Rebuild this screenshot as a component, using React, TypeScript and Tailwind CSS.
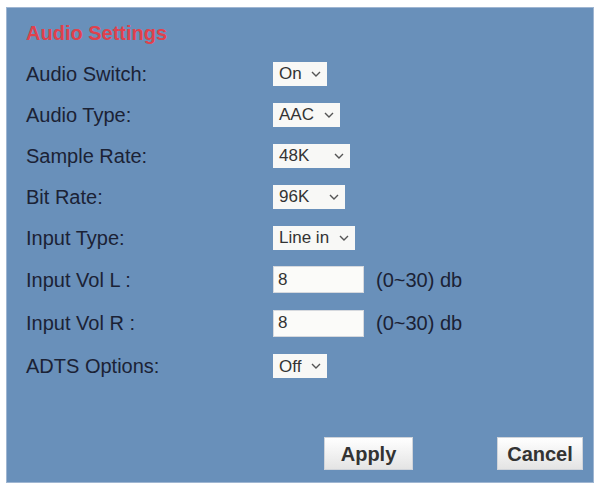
import React from "react";

type Row =
  | { label: string; kind: "select"; value: string; width: string }
  | { label: string; kind: "input"; value: string };

const rows: { row: Row; height: string }[] = [
  { row: { label: "Audio Switch:", kind: "select", value: "On", width: "w-[54px]" }, height: "h-[41px]" },
  { row: { label: "Audio Type:", kind: "select", value: "AAC", width: "w-[67px]" }, height: "h-[41px]" },
  { row: { label: "Sample Rate:", kind: "select", value: "48K", width: "w-[77px]" }, height: "h-[41px]" },
  { row: { label: "Bit Rate:", kind: "select", value: "96K", width: "w-[72px]" }, height: "h-[41px]" },
  { row: { label: "Input Type:", kind: "select", value: "Line in", width: "w-[82px]" }, height: "h-[41px]" },
  { row: { label: "Input Vol L :", kind: "input", value: "8" }, height: "h-[43px]" },
  { row: { label: "Input Vol R :", kind: "input", value: "8" }, height: "h-[44px]" },
  { row: { label: "ADTS Options:", kind: "select", value: "Off", width: "w-[54px]" }, height: "h-[42px]" },
];

function Chevron() {
  return (
    <svg width="10" height="6" viewBox="0 0 10 6" className="shrink-0">
      <polyline points="1,1 5,5 9,1" fill="none" stroke="#555" strokeWidth="1.4" />
    </svg>
  );
}

function Select({ value, width }: { value: string; width: string }) {
  return (
    <div
      className={`${width} h-[24px] bg-[#f8f8f6] flex items-center justify-between pl-[6px] pr-[6px] text-[17px] leading-none text-[#333]`}
    >
      <span>{value}</span>
      <Chevron />
    </div>
  );
}

export default function App() {
  return (
    <div
      className="w-[601px] h-[487px] bg-white pt-[7px] pl-[6px]"
      style={{ fontFamily: '"Liberation Sans", Arial, sans-serif' }}
    >
      <div className="w-[588px] h-[476px] bg-[#6990ba] border border-[#9fb6d2] flex flex-col pl-[19px] pr-[10px]">
        <div className="pt-[13px] h-[24px] leading-[24px] mb-[8px] box-content text-[20px] font-bold text-[#e0414c]">
          Audio Settings
        </div>
        {rows.map(({ row, height }) => (
          <div key={row.label} className={`${height} flex items-center`}>
            <div className="w-[247px] text-[20px] text-[#1b2235]">{row.label}</div>
            {row.kind === "select" ? (
              <Select value={row.value} width={row.width} />
            ) : (
              <div className="flex items-center">
                <div className="w-[91px] h-[27px] bg-[#fbfbf9] border border-[#d6d9de] flex items-center pl-[4px] text-[17px] text-[#333]">
                  {row.value}
                </div>
                <span className="ml-[12px] text-[20px] text-[#1b2235]">(0~30) db</span>
              </div>
            )}
          </div>
        ))}
        <div className="mt-[50px] flex items-center">
          <button className="ml-[298px] w-[89px] h-[33px] bg-gradient-to-b from-[#ffffff] to-[#e4e4e4] border border-[#d0d4da] text-[20px] font-bold text-[#333]">
            Apply
          </button>
          <button className="ml-[84px] w-[86px] h-[33px] bg-gradient-to-b from-[#ffffff] to-[#e4e4e4] border border-[#d0d4da] text-[20px] font-bold text-[#333]">
            Cancel
          </button>
        </div>
      </div>
    </div>
  );
}
